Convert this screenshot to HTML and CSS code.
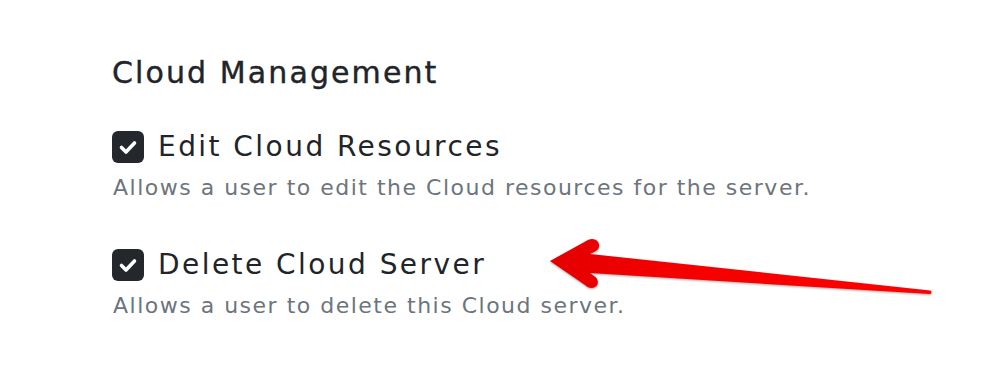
FILE: index.html
```html
<!DOCTYPE html>
<html lang="en">
<head>
<meta charset="utf-8">
<title>Cloud Management</title>
<link rel="stylesheet" href="styles.css">
</head>
<body>
<section class="panel">
  <h2 class="title">Cloud Management</h2>
  <div class="perm">
    <label class="perm-row">
      <span class="check"><svg viewBox="0 0 32 32" width="32" height="32"><path d="M9.5 16.5 L14 21 L22.5 12" fill="none" stroke="#fff" stroke-width="3.6" stroke-linecap="round" stroke-linejoin="round"/></svg></span>
      <span class="perm-label">Edit Cloud Resources</span>
    </label>
    <p class="perm-desc">Allows a user to edit the Cloud resources for the server.</p>
  </div>
  <div class="perm">
    <label class="perm-row">
      <span class="check"><svg viewBox="0 0 32 32" width="32" height="32"><path d="M9.5 16.5 L14 21 L22.5 12" fill="none" stroke="#fff" stroke-width="3.6" stroke-linecap="round" stroke-linejoin="round"/></svg></span>
      <span class="perm-label">Delete Cloud Server</span>
    </label>
    <p class="perm-desc">Allows a user to delete this Cloud server.</p>
  </div>
</section>
<svg class="arrow" viewBox="0 0 1000 390" width="1000" height="390">
  <defs>
    <linearGradient id="rg" x1="0" y1="0" x2="1" y2="0">
      <stop offset="0" stop-color="#e30000"/>
      <stop offset="0.3" stop-color="#f40000"/>
      <stop offset="1" stop-color="#ff0000"/>
    </linearGradient>
  </defs>
  <path d="M550,261 L588,240 C594,237 600,241 599,247 C598,250 596,251 594,252 L590,254 L930,290.5 C932,291 932,293.5 930,294 L590,273 L594,276 C599,279 599,285 595,287 C592,289 588,288 585,285 Z" fill="url(#rg)" class="arrow-shape"/>
</svg>
</body>
</html>
```

FILE: styles.css
```css
html, body {
  margin: 0;
  padding: 0;
  background: #ffffff;
}
body {
  width: 1000px;
  height: 390px;
  overflow: hidden;
  position: relative;
  font-family: "DejaVu Sans", "Noto Sans", sans-serif;
}
.panel {
  padding: 55px 0 0 112px;
}
.title {
  margin: 0 0 38px 0;
  font-size: 30px;
  line-height: 36px;
  font-weight: 400;
  letter-spacing: 2.1px;
  color: #212529;
  -webkit-text-stroke: 0.4px #212529;
}
.perm {
  margin-bottom: 45px;
}
.perm-row {
  display: flex;
  align-items: center;
  gap: 14px;
}
.check {
  width: 32px;
  height: 32px;
  border-radius: 6px;
  background: #24282c;
  display: flex;
  align-items: center;
  justify-content: center;
  flex: none;
}
.check svg {
  display: block;
}
.perm-label {
  font-size: 28px;
  line-height: 36px;
  letter-spacing: 2.45px;
  color: #212529;
}
.perm-desc {
  margin: 9px 0 0 1px;
  font-size: 22px;
  line-height: 28px;
  letter-spacing: 1.5px;
  color: #6c757d;
}
.arrow {
  position: absolute;
  left: 0;
  top: 0;
  pointer-events: none;
}
.arrow-shape {
  filter: drop-shadow(0 1px 1px rgba(0,0,0,0.35));
}
```
